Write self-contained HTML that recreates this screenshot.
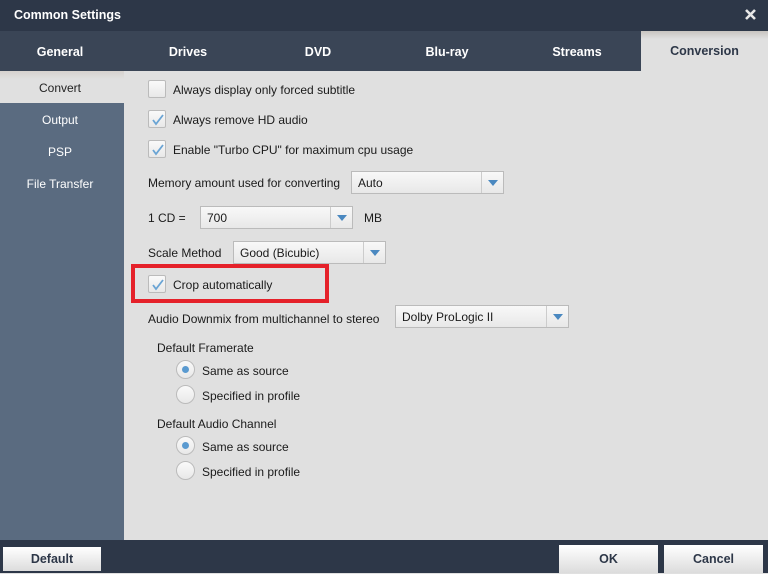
<!DOCTYPE html><html><head><style>
*{margin:0;padding:0;box-sizing:border-box}
body{width:768px;height:573px;position:relative;overflow:hidden;font-family:"Liberation Sans",sans-serif;font-size:12px;color:#1a1a1a;background:#e0e0e0}
.a{position:absolute}
.tab{position:absolute;top:31px;height:40px;line-height:43px;text-align:center;color:#fff;font-weight:bold;font-size:12.5px}
.cb{position:absolute;width:18px;height:18px;border:1px solid #bbb;background:linear-gradient(#fafafa,#e8e8e8);border-radius:2px}
.cb svg{position:absolute;left:2px;top:2px}
.lbl{position:absolute;font-size:12px}
.dd{position:absolute;height:23px;border:1px solid #bbb;background:linear-gradient(#f8f8f8,#e8e8e8)}
.dd span{position:absolute;left:6px;top:4px}
.dd i{position:absolute;right:0;top:0;width:22px;height:21px;border-left:1px solid #ccc}
.dd i:after{content:"";position:absolute;left:6px;top:8px;border-left:5px solid transparent;border-right:5px solid transparent;border-top:6px solid #4a88c0}
.rd{position:absolute;width:19px;height:19px;border-radius:50%;border:1px solid #bbb;background:linear-gradient(#fafafa,#e8e8e8)}
.rd.on:after{content:"";position:absolute;left:5px;top:5px;width:7px;height:7px;border-radius:50%;background:#5a9ad0}
.btn{position:absolute;background:linear-gradient(#fff,#dcdcdc);text-align:center;font-weight:bold;font-size:12.5px;color:#2d3748}
</style></head><body>
<div class="a" style="left:0;top:0;width:768px;height:31px;background:#2d3748"></div>
<div class="a" style="left:14px;top:8px;color:#fff;font-weight:bold;font-size:12.5px">Common Settings</div>
<svg class="a" style="left:745px;top:9px" width="11" height="11"><path d="M1 1L10 10M10 1L1 10" stroke="#e8e8e8" stroke-width="2.6"/></svg>
<div class="a" style="left:0;top:31px;width:768px;height:40px;background:#3a4556"></div>
<div class="tab" style="left:0;width:120px">General</div>
<div class="tab" style="left:128px;width:120px">Drives</div>
<div class="tab" style="left:258px;width:120px">DVD</div>
<div class="tab" style="left:387px;width:120px">Blu-ray</div>
<div class="tab" style="left:517px;width:120px">Streams</div>
<div class="tab" style="left:641px;width:127px;background:linear-gradient(#c8c4c0,#e0e0e0 8px);color:#2d3748;line-height:41px">Conversion</div>
<div class="a" style="left:0;top:71px;width:124px;height:469px;background:#5a6b80"></div>
<div class="a" style="left:0;top:71px;width:124px;height:32px;background:linear-gradient(#d6d2ce,#e0e0e0 8px)"></div>
<div class="a" style="left:0;top:81px;width:120px;text-align:center;color:#222">Convert</div>
<div class="a" style="left:0;top:113px;width:120px;text-align:center;color:#fff">Output</div>
<div class="a" style="left:0;top:145px;width:120px;text-align:center;color:#fff">PSP</div>
<div class="a" style="left:0;top:177px;width:120px;text-align:center;color:#fff">File Transfer</div>

<div class="cb" style="left:148px;top:80px"></div><div class="lbl" style="left:173px;top:83px">Always display only forced subtitle</div>
<div class="cb" style="left:148px;top:110px"><svg width="14" height="14"><path d="M2 7l3 4 7-9" stroke="#6aa4d4" stroke-width="1.8" fill="none"/></svg></div><div class="lbl" style="left:173px;top:113px">Always remove HD audio</div>
<div class="cb" style="left:148px;top:140px"><svg width="14" height="14"><path d="M2 7l3 4 7-9" stroke="#6aa4d4" stroke-width="1.8" fill="none"/></svg></div><div class="lbl" style="left:173px;top:143px">Enable "Turbo CPU" for maximum cpu usage</div>
<div class="lbl" style="left:148px;top:176px">Memory amount used for converting</div>
<div class="dd" style="left:351px;top:171px;width:153px"><span>Auto</span><i></i></div>
<div class="lbl" style="left:148px;top:211px">1 CD =</div>
<div class="dd" style="left:200px;top:206px;width:153px"><span>700</span><i></i></div>
<div class="lbl" style="left:364px;top:211px">MB</div>
<div class="lbl" style="left:148px;top:246px">Scale Method</div>
<div class="dd" style="left:233px;top:241px;width:153px"><span>Good (Bicubic)</span><i></i></div>
<div class="a" style="left:131px;top:264px;width:198px;height:39px;border:4px solid #e5212a"></div>
<div class="cb" style="left:148px;top:275px"><svg width="14" height="14"><path d="M2 7l3 4 7-9" stroke="#6aa4d4" stroke-width="1.8" fill="none"/></svg></div><div class="lbl" style="left:173px;top:278px">Crop automatically</div>
<div class="lbl" style="left:148px;top:312px">Audio Downmix from multichannel to stereo</div>
<div class="dd" style="left:395px;top:305px;width:174px"><span>Dolby ProLogic II</span><i></i></div>
<div class="lbl" style="left:157px;top:341px">Default Framerate</div>
<div class="rd on" style="left:176px;top:360px"></div><div class="lbl" style="left:202px;top:364px">Same as source</div>
<div class="rd" style="left:176px;top:385px"></div><div class="lbl" style="left:202px;top:389px">Specified in profile</div>
<div class="lbl" style="left:157px;top:417px">Default Audio Channel</div>
<div class="rd on" style="left:176px;top:436px"></div><div class="lbl" style="left:202px;top:440px">Same as source</div>
<div class="rd" style="left:176px;top:461px"></div><div class="lbl" style="left:202px;top:465px">Specified in profile</div>

<div class="a" style="left:0;top:540px;width:768px;height:33px;background:#2d3748"></div>
<div class="btn" style="left:3px;top:547px;width:98px;height:24px;line-height:25px">Default</div>
<div class="btn" style="left:559px;top:545px;width:99px;height:28px;line-height:29px">OK</div>
<div class="btn" style="left:664px;top:545px;width:99px;height:28px;line-height:29px">Cancel</div>
</body></html>
